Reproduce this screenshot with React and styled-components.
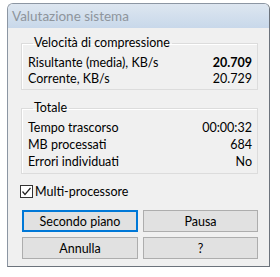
import React from "react";
import styled, { createGlobalStyle } from "styled-components";

const font = `Lato, "Open Sans", sans-serif`;

const Global = createGlobalStyle`
  html, body {
    margin: 0;
    background: #ffffff;
  }
  body {
    padding: 3px 0 0 7px;
    font-family: ${font};
  }
`;

const Finestra = styled.div`
  width: 263px;
  height: 264px;
  box-sizing: border-box;
  border: 1px solid #8c96a3;
  border-right-color: #6c737c;
  border-bottom-color: #6c737c;
  border-radius: 6px 6px 0 0;
  background: #f0f0f0;
  display: flex;
  flex-direction: column;
  overflow: hidden;
`;

const BarraTitolo = styled.div`
  height: 24px;
  flex-shrink: 0;
  display: flex;
  align-items: center;
  padding-left: 4px;
  background: linear-gradient(#dde6f0, #c8d8ea);
  color: #8e959c;
  font-size: 13.5px;
`;

const Corpo = styled.div`
  flex: 1;
  display: flex;
  flex-direction: column;
  padding: 7px 11px 0 13px;
  background: #f0f0f0;
`;

const Gruppo = styled.fieldset`
  margin: ${(p) => p.$sopra}px 0 0 0;
  padding: 3px 5px 3px 6px;
  border: 1px solid #dcdcdc;
  box-shadow: inset 1px 1px 0 #ffffff;
  min-width: 0;
`;

const Titolo = styled.legend`
  margin-left: 5px;
  padding: 0 2px 0 1px;
  font-size: 12.5px;
  line-height: 16px;
  color: #000;
`;

const Riga = styled.div`
  display: flex;
  justify-content: space-between;
  align-items: center;
  height: ${(p) => p.$alt}px;
  font-size: 12.5px;
  color: #000;
`;

const Valore = styled.span`
  font-weight: ${(p) => (p.$forte ? 700 : 400)};
`;

const RigaCheck = styled.label`
  display: flex;
  align-items: center;
  gap: 2px;
  margin: 10px 0 0 -1px;
  height: 14px;
  font-size: 12.5px;
  color: #000;
`;

const Casella = styled.span`
  width: 13px;
  height: 13px;
  box-sizing: border-box;
  border: 1px solid #333333;
  background: #ffffff;
  display: flex;
  align-items: center;
  justify-content: center;
`;

const GrigliaBottoni = styled.div`
  display: grid;
  grid-template-columns: 116px 115px;
  column-gap: 5px;
  row-gap: 5px;
  margin: 12px 0 0 1px;
`;

const Bottone = styled.button`
  height: 22px;
  box-sizing: border-box;
  margin: 0;
  padding: 0;
  font-family: ${font};
  font-size: 12.5px;
  color: #000;
  background: #e1e1e1;
  border: 1px solid ${(p) => (p.$predefinito ? "#0078d7" : "#adadad")};
  box-shadow: ${(p) => (p.$predefinito ? "inset 0 0 0 1px #0078d7" : "none")};
`;

export default function App() {
  return (
    <>
      <Global />
      <Finestra>
        <BarraTitolo>Valutazione sistema</BarraTitolo>
        <Corpo>
          <Gruppo $sopra={0}>
            <Titolo>Velocità di compressione</Titolo>
            <Riga $alt={16}>
              <span>Risultante (media), KB/s</span>
              <Valore $forte>20.709</Valore>
            </Riga>
            <Riga $alt={16}>
              <span>Corrente, KB/s</span>
              <Valore>20.729</Valore>
            </Riga>
          </Gruppo>
          <Gruppo $sopra={10}>
            <Titolo>Totale</Titolo>
            <Riga $alt={17}>
              <span>Tempo trascorso</span>
              <Valore>00:00:32</Valore>
            </Riga>
            <Riga $alt={17}>
              <span>MB processati</span>
              <Valore>684</Valore>
            </Riga>
            <Riga $alt={17}>
              <span>Errori individuati</span>
              <Valore>No</Valore>
            </Riga>
          </Gruppo>
          <RigaCheck>
            <Casella>
              <svg width="11" height="11" viewBox="0 0 11 11">
                <polyline
                  points="1.5,5.5 4,8.5 9.5,2"
                  fill="none"
                  stroke="#222"
                  strokeWidth="1.2"
                />
              </svg>
            </Casella>
            Multi-processore
          </RigaCheck>
          <GrigliaBottoni>
            <Bottone $predefinito>Secondo piano</Bottone>
            <Bottone>Pausa</Bottone>
            <Bottone>Annulla</Bottone>
            <Bottone>?</Bottone>
          </GrigliaBottoni>
        </Corpo>
      </Finestra>
    </>
  );
}
